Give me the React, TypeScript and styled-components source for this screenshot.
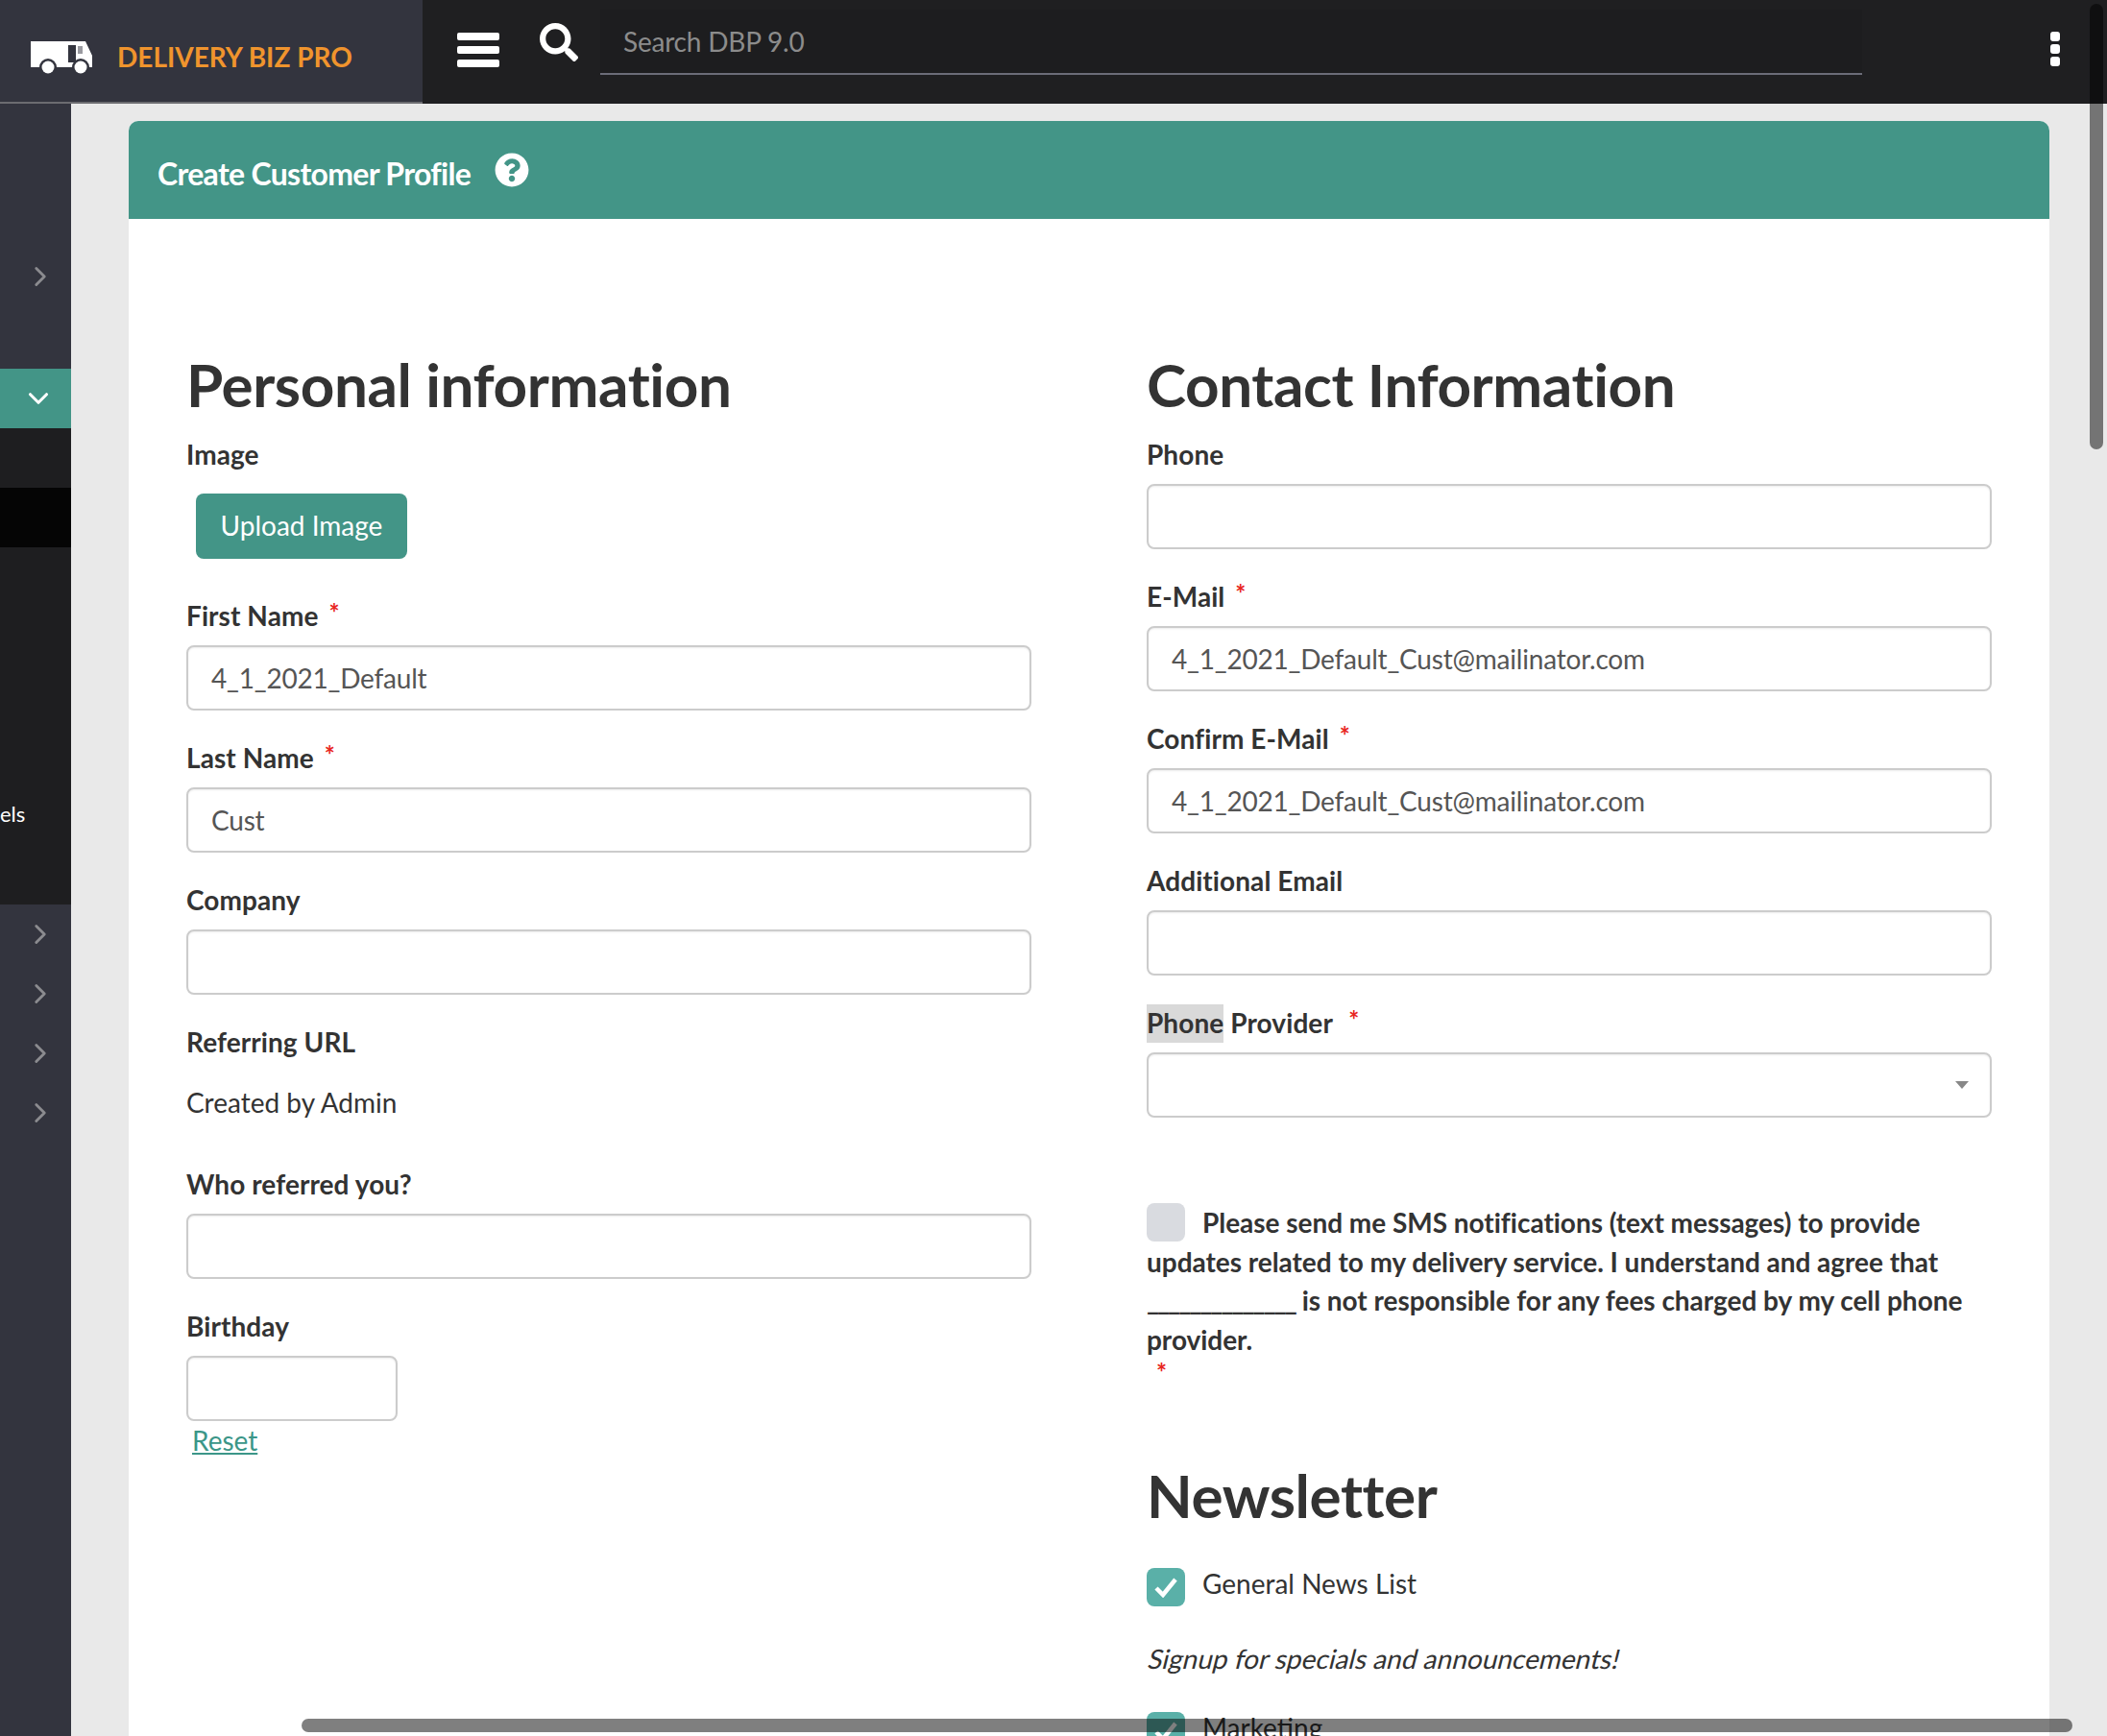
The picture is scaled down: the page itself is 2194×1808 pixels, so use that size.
import { createGlobalStyle } from "styled-components";
import styled from "styled-components";
import { ChevronDown, ChevronRight } from "lucide-react";
import { FaQuestionCircle, FaSearch } from "react-icons/fa";

const GlobalStyle = createGlobalStyle`
  html, body {
    margin: 0;
    padding: 0;
    height: 1808px;
    overflow: hidden;
    background: #e9e9e9;
  }
  * {
    box-sizing: border-box;
  }
`;

const Wrapper = styled.div`
  position: relative;
  width: 2194px;
  height: 1808px;
  overflow: hidden;
  font-family: Lato, "Liberation Sans", sans-serif;
  font-size: 28px;
  color: #333;
`;

const TopBar = styled.header`
  display: flex;
  height: 108px;
  background: #1f1f21;
`;

const Brand = styled.div`
  width: 440px;
  display: flex;
  align-items: center;
  gap: 26px;
  padding: 12px 0 0 31px;
  background: #33343e;
  border-bottom: 2px solid #6c6c70;
`;

const BrandName = styled.span`
  color: #f0942d;
  font-weight: 700;
  font-size: 28px;
`;

const TopTools = styled.div`
  flex: 1;
  display: flex;
  align-items: flex-start;
`;

const Burger = styled.svg`
  width: 44px;
  height: 36px;
  margin: 34px 0 0 36px;
  fill: #fff;
`;

const SearchIcon = styled(FaSearch)`
  width: 40px;
  height: 40px;
  margin: 24px 0 0 42px;
  color: #fff;
`;

const SearchInput = styled.input`
  width: 1314px;
  height: 68px;
  margin: 10px 0 0 23px;
  padding: 0 24px;
  border: 0;
  border-bottom: 2px solid #6b6c78;
  background: #1d1d1f;
  font: inherit;
  letter-spacing: -0.2px;
  color: #fff;
  &::placeholder {
    color: #8c8c8c;
    opacity: 1;
  }
`;

const Kebab = styled.svg`
  width: 10px;
  height: 36px;
  margin: 33px 0 0 196px;
  fill: #fff;
`;

const Body = styled.div`
  display: flex;
  height: 1700px;
`;

const Sidebar = styled.nav`
  width: 74px;
  flex: none;
  display: flex;
  flex-direction: column;
  background: #33343e;
`;

const SideRow = styled.div<{ $h?: number; $bg?: string; $color?: string; $right?: number }>`
  height: ${(p) => p.$h ?? 62}px;
  flex: none;
  display: flex;
  align-items: center;
  justify-content: flex-end;
  padding-right: ${(p) => p.$right ?? 15}px;
  background: ${(p) => p.$bg ?? "transparent"};
  color: ${(p) => p.$color ?? "#8b8b8f"};
`;

const SideText = styled.div`
  height: 372px;
  flex: none;
  display: flex;
  align-items: center;
  background: #1e1e20;
  color: #fff;
  font-size: 22px;
  overflow: hidden;
  padding-top: 184px;
  line-height: 1;
`;

const Main = styled.main`
  flex: 1;
  padding: 18px 60px 0;
`;

const Card = styled.section`
  width: 2000px;
  height: 1800px;
  background: #fff;
  border-radius: 10px;
`;

const CardHead = styled.div`
  height: 102px;
  display: flex;
  align-items: center;
  gap: 25px;
  padding: 0 30px;
  background: #439587;
  border-radius: 10px 10px 0 0;
  color: #fff;
`;

const CardTitle = styled.h2`
  margin: 6px 0 0;
  font-size: 32px;
  font-weight: 700;
  letter-spacing: -0.7px;
`;

const HelpIcon = styled(FaQuestionCircle)`
  width: 36px;
  height: 36px;
`;

const Columns = styled.div`
  display: grid;
  grid-template-columns: 880px 880px;
  column-gap: 120px;
  padding: 136px 60px 0;
`;

const Column = styled.div``;

const Heading = styled.h1<{ $top?: number; $bottom?: number }>`
  margin: ${(p) => p.$top ?? 0}px 0 ${(p) => p.$bottom ?? 18}px;
  font-size: 62px;
  line-height: 72px;
  font-weight: 700;
  letter-spacing: -0.4px;
  color: #333;
`;

const Field = styled.div<{ $bottom?: number }>`
  margin-bottom: ${(p) => p.$bottom ?? 30}px;
`;

const Label = styled.label<{ $gap?: number }>`
  display: block;
  height: 40px;
  margin-bottom: ${(p) => p.$gap ?? 10}px;
  line-height: 38px;
  font-weight: 700;
  letter-spacing: 0.08px;
  white-space: nowrap;
`;

const Required = styled.span<{ $left?: number }>`
  margin-left: ${(p) => p.$left ?? 4}px;
  color: #e8261e;
  font-size: 26px;
  line-height: 0;
  vertical-align: 4px;
`;

const Highlight = styled.span`
  display: inline-block;
  height: 40px;
  background: #d9d9d9;
  margin-right: 7px;
`;

const TextInput = styled.input<{ $width?: number }>`
  display: block;
  width: ${(p) => (p.$width ? `${p.$width}px` : "100%")};
  height: 68px;
  padding: 0 24px;
  border: 2px solid #ccc;
  border-radius: 8px;
  box-shadow: inset 0 1px 2px rgba(0, 0, 0, 0.08);
  background: #fff;
  font: inherit;
  letter-spacing: -0.2px;
  color: #555;
  outline: none;
`;

const UploadButton = styled.button`
  display: block;
  width: 220px;
  height: 68px;
  margin-left: 10px;
  padding-bottom: 4px;
  border: 0;
  border-radius: 8px;
  background: #439587;
  color: #fff;
  font: inherit;
`;

const StaticText = styled.div`
  margin-top: 22px;
  line-height: 40px;
`;

const ResetLink = styled.a`
  display: block;
  width: fit-content;
  margin-left: 6px;
  line-height: 40px;
  color: #3b9688;
  text-decoration: underline;
`;

const SelectBox = styled.div`
  position: relative;
  height: 68px;
  border: 2px solid #ccc;
  border-radius: 8px;
  box-shadow: inset 0 1px 2px rgba(0, 0, 0, 0.08);
  &::after {
    content: "";
    position: absolute;
    right: 22px;
    top: 28px;
    border-left: 7px solid transparent;
    border-right: 7px solid transparent;
    border-top: 8px solid #888;
  }
`;

const SmsText = styled.p`
  margin: 89px 0 0;
  line-height: 40.6px;
  font-weight: 700;
  letter-spacing: -0.03px;
`;

const EmptyCheck = styled.span`
  display: inline-block;
  width: 40px;
  height: 40px;
  margin-right: 18px;
  border-radius: 8px;
  background: #d9dbe0;
  vertical-align: top;
`;

const Blank = styled.span`
  letter-spacing: -2px;
`;

const SmsRequired = styled.div`
  height: 28px;
  margin-left: 10px;
  color: #e8261e;
  font-size: 26px;
  line-height: 28px;
  font-weight: 700;
`;

const CheckRow = styled.div`
  display: flex;
  align-items: flex-start;
  gap: 18px;
  height: 40px;
  line-height: 40px;
`;

const CheckBox = styled.span`
  width: 40px;
  height: 40px;
  margin-top: 4px;
  border-radius: 8px;
  background: #5ab0a8;
  display: flex;
  align-items: center;
  justify-content: center;
  flex: none;
`;

const Note = styled.p`
  margin: 38px 0 32px;
  line-height: 40px;
  transform: skewX(-14deg);
  transform-origin: left 75%;
`;

const ScrollV = styled.div`
  position: absolute;
  left: 2176px;
  top: 4px;
  width: 14px;
  height: 464px;
  border-radius: 7px;
  background: rgba(0, 0, 0, 0.5);
`;

const ScrollH = styled.div`
  position: absolute;
  left: 314px;
  top: 1790px;
  width: 1844px;
  height: 14px;
  border-radius: 7px;
  background: rgba(0, 0, 0, 0.5);
`;

function Truck() {
  return (
    <svg width="65" height="35" viewBox="0 0 65 35">
      <path fill="#fff" d="M1 1H58L65 16V28H1Z" />
      <rect x="40" y="5" width="8" height="18" fill="#33343e" />
      <rect x="50" y="6" width="5" height="8" fill="#9a9aa0" />
      <circle cx="19" cy="28" r="9" fill="#33343e" />
      <circle cx="19" cy="28" r="6.5" fill="#fff" />
      <circle cx="53" cy="28" r="9" fill="#33343e" />
      <circle cx="53" cy="28" r="6.5" fill="#fff" />
    </svg>
  );
}

function Check() {
  return (
    <svg width="26" height="22" viewBox="0 0 26 22">
      <path d="M3 12l7 7L23 3" fill="none" stroke="#fff" strokeWidth="4.5" />
    </svg>
  );
}

function App() {
  return (
    <Wrapper>
      <GlobalStyle />
      <TopBar>
        <Brand>
          <Truck />
          <BrandName>DELIVERY BIZ PRO</BrandName>
        </Brand>
        <TopTools>
          <Burger viewBox="0 0 44 36">
            <rect y="0" width="44" height="8" rx="2" />
            <rect y="14" width="44" height="8" rx="2" />
            <rect y="28" width="44" height="8" rx="2" />
          </Burger>
          <SearchIcon />
          <SearchInput placeholder="Search DBP 9.0" />
          <Kebab viewBox="0 0 10 36">
            <rect y="0" width="10" height="10" rx="3" />
            <rect y="13" width="10" height="10" rx="3" />
            <rect y="26" width="10" height="10" rx="3" />
          </Kebab>
        </TopTools>
      </TopBar>
      <Body>
        <Sidebar>
          <SideRow $h={149} />
          <SideRow>
            <ChevronRight size={34} strokeWidth={2} />
          </SideRow>
          <SideRow $h={65} />
          <SideRow $bg="#439587" $color="#fff" $right={17}>
            <ChevronDown size={34} strokeWidth={2.2} />
          </SideRow>
          <SideRow $bg="#1e1e20" />
          <SideRow $bg="#050505" />
          <SideText>els</SideText>
          <SideRow>
            <ChevronRight size={34} strokeWidth={2} />
          </SideRow>
          <SideRow>
            <ChevronRight size={34} strokeWidth={2} />
          </SideRow>
          <SideRow>
            <ChevronRight size={34} strokeWidth={2} />
          </SideRow>
          <SideRow>
            <ChevronRight size={34} strokeWidth={2} />
          </SideRow>
        </Sidebar>
        <Main>
          <Card>
            <CardHead>
              <CardTitle>Create Customer Profile</CardTitle>
              <HelpIcon />
            </CardHead>
            <Columns>
              <Column>
                <Heading>Personal information</Heading>
                <Field $bottom={40}>
                  <Label $gap={20}>Image</Label>
                  <UploadButton>Upload Image</UploadButton>
                </Field>
                <Field>
                  <Label>
                    First Name <Required>*</Required>
                  </Label>
                  <TextInput defaultValue="4_1_2021_Default" />
                </Field>
                <Field>
                  <Label>
                    Last Name <Required>*</Required>
                  </Label>
                  <TextInput defaultValue="Cust" />
                </Field>
                <Field>
                  <Label>Company</Label>
                  <TextInput />
                </Field>
                <Field $bottom={46}>
                  <Label>Referring URL</Label>
                  <StaticText>Created by Admin</StaticText>
                </Field>
                <Field>
                  <Label>Who referred you?</Label>
                  <TextInput />
                </Field>
                <Field>
                  <Label>Birthday</Label>
                  <TextInput $width={220} />
                  <ResetLink>Reset</ResetLink>
                </Field>
              </Column>
              <Column>
                <Heading>Contact Information</Heading>
                <Field>
                  <Label>Phone</Label>
                  <TextInput />
                </Field>
                <Field>
                  <Label>
                    E-Mail <Required>*</Required>
                  </Label>
                  <TextInput defaultValue="4_1_2021_Default_Cust@mailinator.com" />
                </Field>
                <Field>
                  <Label>
                    Confirm E-Mail <Required>*</Required>
                  </Label>
                  <TextInput defaultValue="4_1_2021_Default_Cust@mailinator.com" />
                </Field>
                <Field>
                  <Label>Additional Email</Label>
                  <TextInput />
                </Field>
                <Field $bottom={0}>
                  <Label>
                    <Highlight>Phone</Highlight>
                    Provider <Required $left={10}>*</Required>
                  </Label>
                  <SelectBox />
                </Field>
                <SmsText>
                  <EmptyCheck />
                  Please send me SMS notifications (text messages) to provide updates related to my
                  delivery service. I understand and agree that <Blank>______________</Blank> is not
                  responsible for any fees charged by my cell phone provider.
                </SmsText>
                <SmsRequired>*</SmsRequired>
                <Heading $top={78} $bottom={36}>
                  Newsletter
                </Heading>
                <CheckRow>
                  <CheckBox>
                    <Check />
                  </CheckBox>
                  General News List
                </CheckRow>
                <Note>Signup for specials and announcements!</Note>
                <CheckRow>
                  <CheckBox>
                    <Check />
                  </CheckBox>
                  Marketing
                </CheckRow>
              </Column>
            </Columns>
          </Card>
        </Main>
      </Body>
      <ScrollV />
      <ScrollH />
    </Wrapper>
  );
}

export default App;
